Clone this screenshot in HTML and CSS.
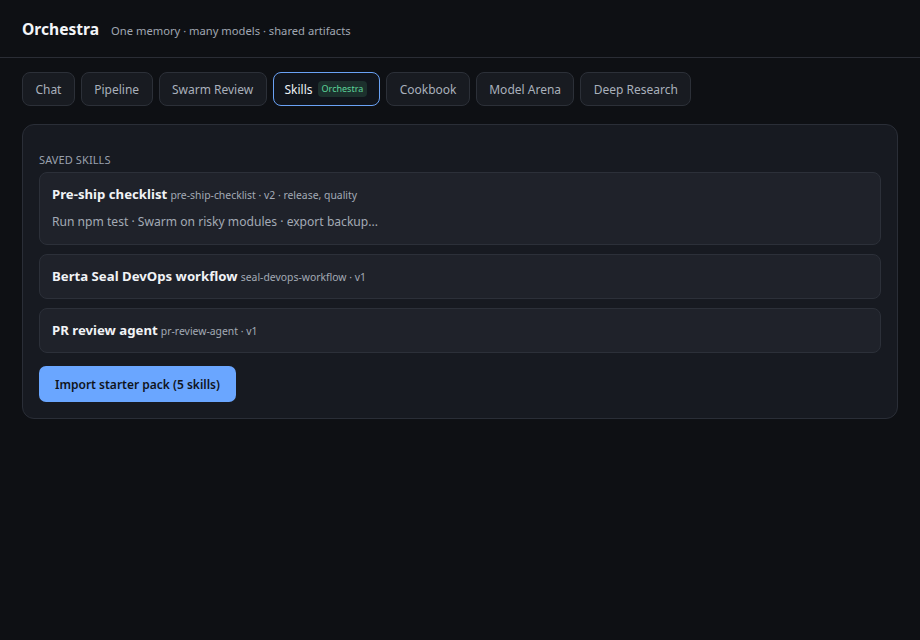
FILE: index.html
```html
<!DOCTYPE html>
<html>
<head>
<meta charset="utf-8">
<link rel="stylesheet" href="styles.css">
</head>
<body>
<header class="top">
  <h1 class="brand">Orchestra</h1>
  <span class="tagline">One memory · many models · shared artifacts</span>
</header>
<nav class="tabs">
  <button class="tab">Chat</button>
  <button class="tab">Pipeline</button>
  <button class="tab">Swarm Review</button>
  <button class="tab active">Skills <span class="badge">Orchestra</span></button>
  <button class="tab">Cookbook</button>
  <button class="tab">Model Arena</button>
  <button class="tab">Deep Research</button>
</nav>
<main class="panel">
  <div class="section-title">SAVED SKILLS</div>
  <div class="skill">
    <div class="skill-head"><span class="skill-name">Pre-ship checklist</span> <span class="skill-meta">pre-ship-checklist · v2 · release, quality</span></div>
    <div class="skill-desc">Run npm test · Swarm on risky modules · export backup...</div>
  </div>
  <div class="skill">
    <div class="skill-head"><span class="skill-name">Berta Seal DevOps workflow</span> <span class="skill-meta">seal-devops-workflow · v1</span></div>
  </div>
  <div class="skill">
    <div class="skill-head"><span class="skill-name">PR review agent</span> <span class="skill-meta">pr-review-agent · v1</span></div>
  </div>
  <div class="actions">
    <button class="primary">Import starter pack (5 skills)</button>
  </div>
</main>
</body>
</html>
```
FILE: styles.css
```css
* { box-sizing: border-box; }
html, body { margin: 0; padding: 0; }
body {
  background: #0e1014;
  color: #e6e8ec;
  font-family: "Noto Sans", "Open Sans", sans-serif;
  font-size: 12px;
  height: 640px;
}
.top {
  display: flex;
  align-items: baseline;
  gap: 12px;
  padding: 18px 22px 17px;
  border-bottom: 1px solid #2a2d35;
}
.brand {
  margin: 0;
  font-size: 15.6px;
  font-weight: 700;
  color: #f3f5f8;
  line-height: 22px;
}
.tagline {
  font-size: 11.2px;
  color: #a0a7b2;
}
.tabs {
  display: flex;
  gap: 6px;
  padding: 14px 22px 18px;
}
.tab {
  font-family: inherit;
  font-size: 12px;
  color: #a9b0bb;
  background: #181b21;
  border: 1px solid #2c3038;
  border-radius: 8px;
  height: 34px;
  padding: 0 12.4px;
  display: flex;
  align-items: center;
  gap: 5px;
}
.tab.active {
  color: #eef1f5;
  background: #11151c;
  border-color: #6aa2f5;
  padding: 0 12px 0 11px;
}
.badge {
  font-size: 9px;
  color: #5cd59a;
  background: #1c302d;
  border-radius: 4px;
  padding: 2px 4px;
  line-height: 12px;
}
.panel {
  margin: 0 22px;
  background: #171a21;
  border: 1px solid #2a2e37;
  border-radius: 12px;
  padding: 28px 16px 16px;
  display: flex;
  flex-direction: column;
  gap: 9px;
}
.section-title {
  font-size: 11px;
  color: #9aa1ad;
  letter-spacing: 0.1px;
  line-height: 14px;
  margin-bottom: -4px;
}
.skill {
  background: #1f222a;
  border: 1px solid #2c3039;
  border-radius: 8px;
  padding: 12px 12px;
  display: flex;
  flex-direction: column;
  gap: 8px;
}
.skill-head {
  height: 19px;
  line-height: 19px;
  white-space: nowrap;
}
.skill-name {
  font-size: 13.2px;
  font-weight: 700;
  color: #f1f3f6;
}
.skill-meta {
  font-size: 10.4px;
  color: #a3aab5;
}
.skill-desc {
  font-size: 12.1px;
  color: #a3aab5;
  line-height: 20px;
}
.actions { padding-top: 4px; }
.primary {
  font-family: inherit;
  font-size: 12px;
  font-weight: 600;
  color: #10141b;
  background: #6aa6ff;
  border: none;
  border-radius: 7px;
  height: 36px;
  padding: 0 16px;
}
```
